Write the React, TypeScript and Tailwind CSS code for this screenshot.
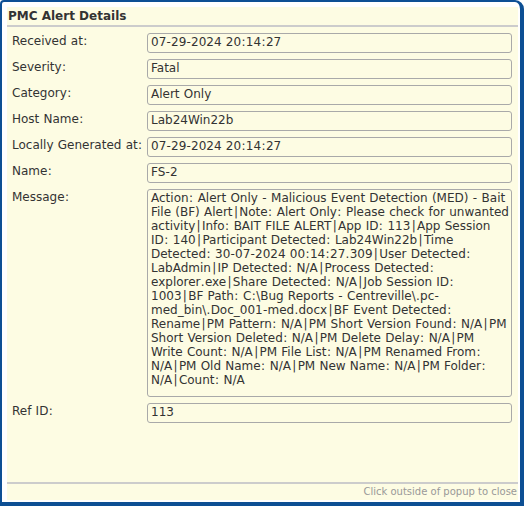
import React from "react";

const fields = [
	{ label: "Received at:", value: "07-29-2024 20:14:27" },
	{ label: "Severity:", value: "Fatal" },
	{ label: "Category:", value: "Alert Only" },
	{ label: "Host Name:", value: "Lab24Win22b" },
	{ label: "Locally Generated at:", value: "07-29-2024 20:14:27" },
	{ label: "Name:", value: "FS-2" },
	{
		label: "Message:",
		value:
			"Action: Alert Only - Malicious Event Detection (MED) - Bait File (BF) Alert|Note: Alert Only: Please check for unwanted activity|Info: BAIT FILE ALERT|App ID: 113|App Session ID: 140|Participant Detected: Lab24Win22b|Time Detected: 30-07-2024 00:14:27.309|User Detected: LabAdmin|IP Detected: N/A|Process Detected: explorer.exe|Share Detected: N/A|Job Session ID: 1003|BF Path: C:\\Bug Reports - Centreville\\.pc-med_bin\\.Doc_001-med.docx|BF Event Detected: Rename|PM Pattern: N/A|PM Short Version Found: N/A|PM Short Version Deleted: N/A|PM Delete Delay: N/A|PM Write Count: N/A|PM File List: N/A|PM Renamed From: N/A|PM Old Name: N/A|PM New Name: N/A|PM Folder: N/A|Count: N/A",
		multi: true,
	},
	{ label: "Ref ID:", value: "113" },
];

// DejaVu runs narrow on pipes, colons, dashes and dots, so pad those a bit
const wide = (s: string) =>
	s.split(/([|:\-.])/).map((p, i) => {
		if (p === "|")
			return (
				<span key={i} className="px-[1.3px]">
					|
				</span>
			);
		if (p === ":")
			return (
				<span key={i} className="px-[0.4px]">
					:
				</span>
			);
		if (p === "-")
			return (
				<span key={i} className="px-[0.2px]">
					-
				</span>
			);
		if (p === ".")
			return (
				<span key={i} className="px-[0.25px]">
					.
				</span>
			);
		return p;
	});

const App = () => {
	return (
		<div
			className="w-[524px] h-[506px] bg-white border-[#0d4f94] border-l-2 border-t-2 border-r-4 border-b-4 rounded-tl-[4px] rounded-tr-[9px] pl-[5px] pt-[5px] pr-[2px] pb-[2px]"
			style={{ fontFamily: '"DejaVu Sans", Verdana, sans-serif' }}
		>
			<div className="h-full bg-[#fdfce3] flex flex-col">
				<div className="h-[18px] px-[1px] text-[12px] font-bold leading-[18px] text-[#333]">
					PMC Alert Details
				</div>
				<div className="h-[2px] bg-[#cccccc]" />
				<div className="flex flex-col gap-[6px] pt-[6px] pl-[5px] pr-[6px] [word-spacing:0.4px]">
					{fields.map((f) => (
						<div key={f.label} className="flex items-start">
							<div className="w-[135px] shrink-0 pt-[1px] text-[12px] leading-[14px] text-[#333]">
								{wide(f.label)}
							</div>
							<div
								className={
									f.multi
										? "flex-1 border border-[#a9a9a9] rounded-[3px] pl-[3px] pr-[2px] pt-[1px] pb-[9px] text-[12px] leading-[14px] text-[#333] break-words"
										: "flex-1 h-[20px] border border-[#a9a9a9] rounded-[3px] pl-[3px] pr-[2px] pt-[1px] text-[12px] leading-[14px] text-[#333]"
								}
							>
								{wide(f.value)}
							</div>
						</div>
					))}
				</div>
				<div className="flex-1" />
				<div className="h-[2px] bg-[#cccccc]" />
				<div className="h-[16px] pr-[1px] text-right text-[10px] leading-[16px] text-[#999]">
					Click outside of popup to close
				</div>
			</div>
		</div>
	);
};

export default App;
